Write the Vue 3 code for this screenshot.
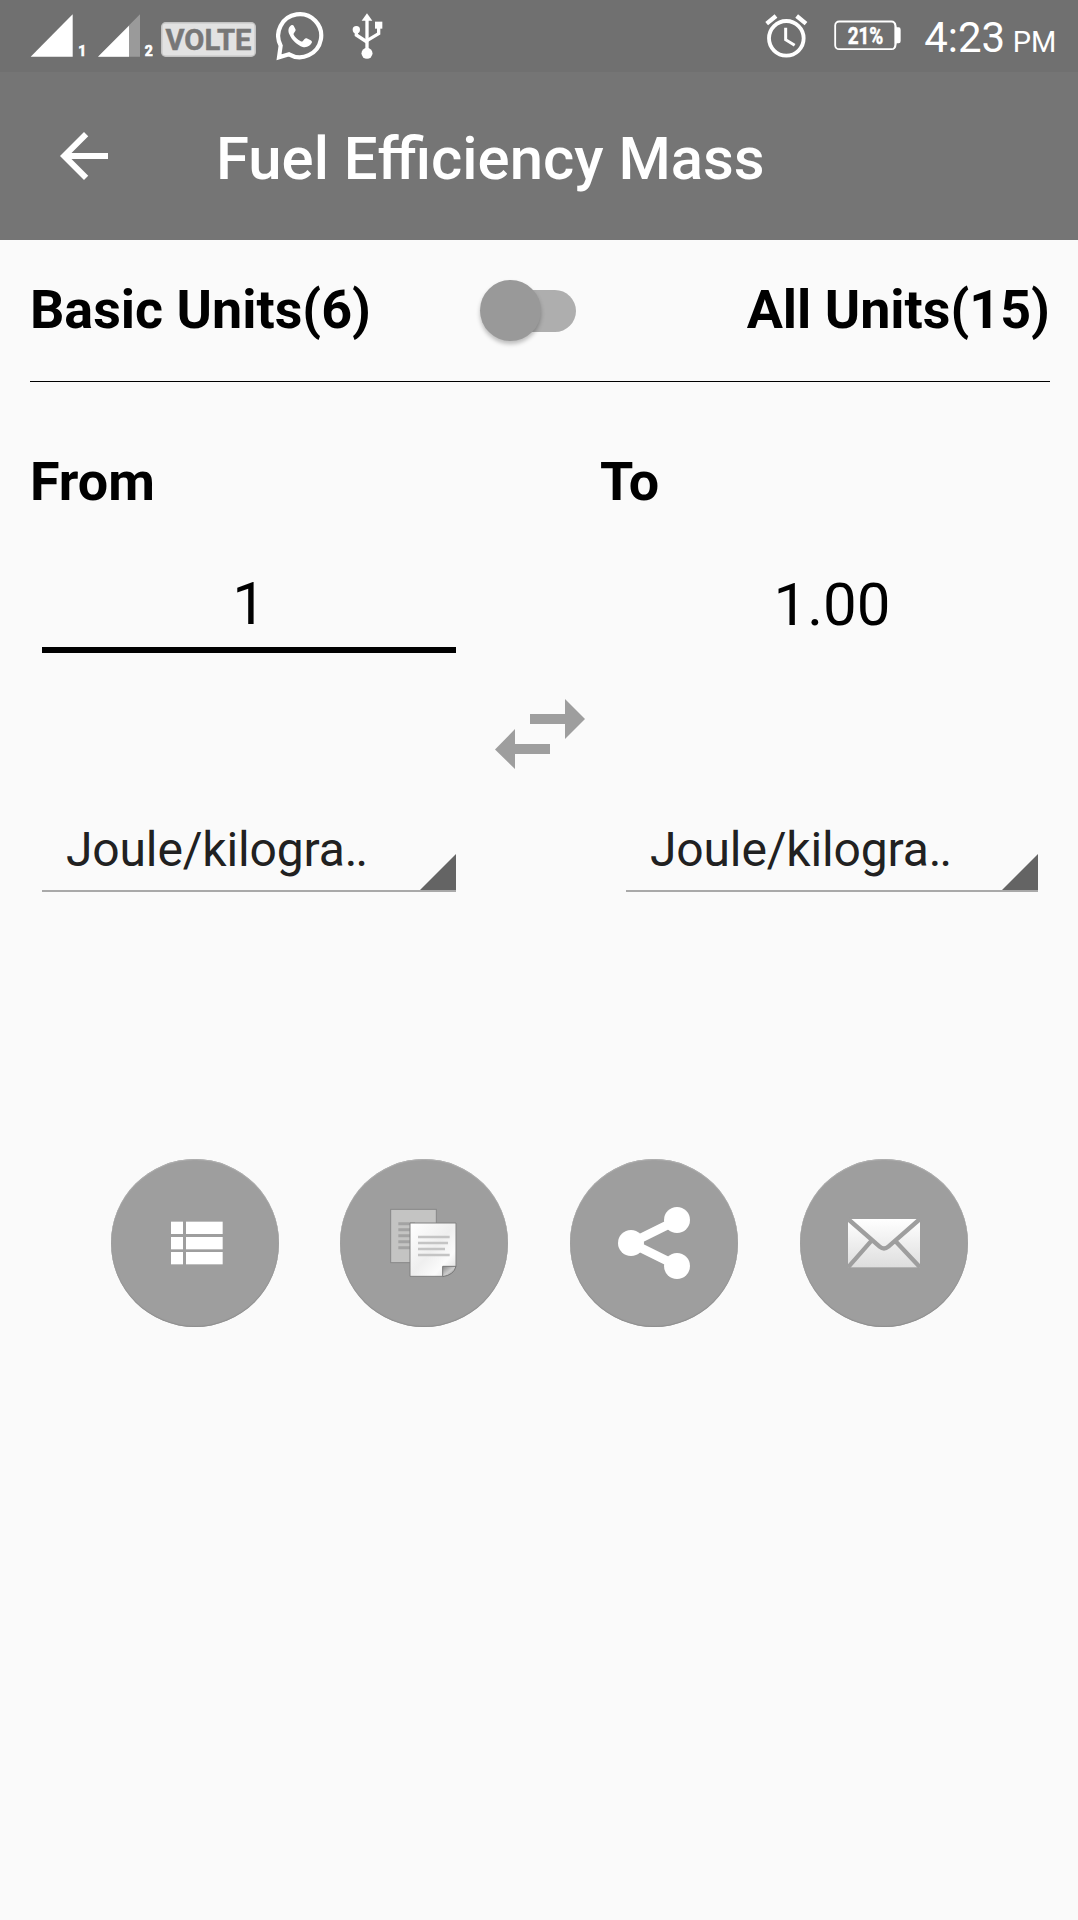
<template>
  <div class="screen">
    <div class="status-bar">
      <svg class="signal" viewBox="0 0 170 150" width="56.67" height="50">
        <path d="M2 140L128 140V13Z" fill="#fff" />
        <text x="145" y="137" class="sim">1</text>
      </svg>
      <svg class="signal-weak" viewBox="0 0 170 150" width="56.67" height="50">
        <path d="M3 140L129 140V13Z" fill="#9a9a9a" />
        <path d="M3 140L96 140V47Z" fill="#fff" />
        <text x="143" y="137" class="sim">2</text>
      </svg>
      <svg class="volte" viewBox="0 0 95 35" width="95" height="35">
        <rect x="0.75" y="0.75" width="93.5" height="33.5" rx="4" fill="#e2e2e2" stroke="#c4c4c4" stroke-width="1.5" />
        <text x="4.5" y="28.3" textLength="86" lengthAdjust="spacingAndGlyphs">VOLTE</text>
      </svg>
      <svg class="whatsapp" viewBox="828 36 144 146" width="48" height="48.67">
        <path
          d="M842 137A64.500 64.500 0 1 1 867 163L837 172Z"
          fill="none"
          stroke="#fff"
          stroke-width="12.500"
        />
        <path
          d="M875 75C865 80 863 92 868 103C876 122 892 136 908 141C920 144 932 138 936 127Q936 123 932 121L920 115Q916 114 913 118L908 124Q905 126 901 123C892 118 886 112 881 104Q880 101 882 99L886 93Q888 90 886 87L881 77Q879 74 875 75Z"
          fill="#fff"
        />
      </svg>
      <svg class="usb" viewBox="1056 40 94 140" width="31.33" height="46.67">
        <g fill="none" stroke="#fff" stroke-width="10">
          <path d="M1101 58V160" />
          <path d="M1069 90V106L1101 127" />
          <path d="M1136 76V102L1101 123" />
        </g>
        <g fill="#fff">
          <path d="M1101 41L1117 63H1085Z" />
          <circle cx="1069" cy="90" r="11" />
          <rect x="1125" y="66" width="22" height="21" />
          <circle cx="1101" cy="161" r="16.500" />
        </g>
      </svg>
      <svg class="alarm" viewBox="76 43 128 132" width="42.67" height="44">
        <g fill="none" stroke="#fff">
          <circle cx="140" cy="116" r="52" stroke-width="11.500" />
          <path d="M138 84V120L165 137" stroke-width="9" />
          <path d="M81 72L109 49M199 72L171 49" stroke-width="13" />
        </g>
      </svg>
      <svg class="battery" viewBox="280 61 202 92" width="67.33" height="30.67">
        <rect x="283.500" y="65.500" width="181" height="83" rx="12" fill="none" stroke="#fff" stroke-width="5.500" />
        <path d="M456 64Q464 66 468 83H474Q480 83 480 90V124Q480 131 474 131H468Q464 148 456 150L462 136V78Z" fill="#fff" />
        <text x="321" y="133" textLength="107" lengthAdjust="spacingAndGlyphs">21%</text>
      </svg>
      <span class="time">4:23</span>
      <span class="meridiem">PM</span>
    </div>

    <header class="app-bar">
      <svg class="back" viewBox="0 0 24 24" width="72" height="72">
        <path d="M20 11H7.830l5.590-5.590L12 4l-8 8 8 8 1.410-1.410L7.830 13H20z" fill="#fff" />
      </svg>
      <h1>Fuel Efficiency Mass</h1>
    </header>

    <main>
      <div class="units">
        <span>Basic Units(6)</span>
        <button class="toggle" :class="{ on: allUnits }" @click="allUnits = !allUnits">
          <span class="thumb" />
        </button>
        <span class="all">All Units(15)</span>
      </div>

      <div class="labels">
        <span>From</span>
        <span>To</span>
      </div>

      <div class="pair values">
        <div class="amount">{{ amount }}</div>
        <div class="result">{{ result }}</div>
      </div>

      <svg class="swap" viewBox="0 0 90 70" width="90" height="70">
        <path d="M35 15H70V0L90 20L70 40V25H35ZM55 45H20V30L0 50.500L20 70V55H55Z" fill="#9e9e9e" />
      </svg>

      <div class="pair">
        <div v-for="(unit, i) in units" :key="i" class="spinner">
          <span>{{ unit }}<span class="dots">..</span></span>
          <svg viewBox="0 0 36 36" width="36" height="36">
            <path d="M36 0V36H0Z" fill="#646464" />
          </svg>
        </div>
      </div>

      <div class="actions">
        <button v-for="action in actions" :key="action" class="action">
          <svg viewBox="0 0 504 504" width="168" height="168">
            <g v-if="action === 'list'" fill="#fff">
              <template v-for="y in [188, 234, 279]" :key="y">
                <rect x="180" :y="y" width="36" height="37" />
                <rect x="225" :y="y" width="110" height="37" />
              </template>
            </g>

            <g v-else-if="action === 'copy'">
              <defs>
                <linearGradient id="page" x1="0" y1="0" x2="1" y2="1">
                  <stop offset="0" stop-color="#fff" />
                  <stop offset="0.5" stop-color="#efefef" />
                  <stop offset="0.75" stop-color="#fbfbfb" />
                  <stop offset="1" stop-color="#d8d8d8" />
                </linearGradient>
                <linearGradient id="fold" x1="0" y1="0" x2="1" y2="1">
                  <stop offset="0" stop-color="#888" />
                  <stop offset="0.5" stop-color="#ccc" />
                  <stop offset="1" stop-color="#777" />
                </linearGradient>
              </defs>
              <rect x="152" y="151" width="137" height="160" fill="#c4c4c3" stroke="#888" stroke-width="3" />
              <path
                d="M175 194H225M175 212H225M175 230H225M175 248H225M175 266H225"
                stroke="#a3a3a3"
                stroke-width="9"
              />
              <path d="M210 192H348V322L308 352H210Z" fill="url(#page)" stroke="#818181" stroke-width="3" />
              <path
                d="M234 234H329M234 252H324M234 270H315M234 288H329"
                stroke="#c4c4c4"
                stroke-width="8"
              />
              <path d="M308 322H348Q342 348 308 353Z" fill="url(#fold)" stroke="#777" stroke-width="3" />
            </g>

            <g v-else-if="action === 'share'" fill="#fff">
              <path d="M321 184L183 252L321 320" fill="none" stroke="#fff" stroke-width="27" />
              <circle cx="321" cy="183" r="39" />
              <circle cx="183" cy="252" r="39" />
              <circle cx="321" cy="321" r="39" />
            </g>

            <g v-else>
              <defs>
                <linearGradient id="mail" x1="0" y1="0" x2="0" y2="1">
                  <stop offset="0" stop-color="#fff" />
                  <stop offset="1" stop-color="#dedede" />
                </linearGradient>
              </defs>
              <rect x="144" y="180" width="216" height="145" fill="url(#mail)" />
              <path
                d="M144 180L239 263Q252 274 265 263L360 180M144 325L212 248M360 325L288 248"
                fill="none"
                stroke="#9e9e9e"
                stroke-width="13"
              />
            </g>
          </svg>
        </button>
      </div>
    </main>
  </div>
</template>

<script setup>
import { computed, ref } from 'vue'

const allUnits = ref(false)
const amount = ref(1)
const units = ref(['Joule/kilogra', 'Joule/kilogra'])
const result = computed(() => amount.value.toFixed(2))

const actions = ['list', 'copy', 'share', 'mail']
</script>

<style>
body {
  background: #fafafa;
}
</style>

<style scoped>
.screen {
  width: 1078px;
  height: 1920px;
  overflow: hidden;
  background: #fafafa;
  color: #000;
  font-family: Roboto, sans-serif;
}

svg {
  display: block;
  flex: none;
}

button {
  border: 0;
  padding: 0;
}

.status-bar {
  display: flex;
  align-items: flex-start;
  height: 72px;
  background: #707070;
  color: #fff;
}

.signal {
  margin: 10px 0 0 30px;
}

.signal-weak {
  margin: 10px 0 0 10px;
}

.sim {
  fill: #fff;
  stroke: #fff;
  stroke-width: 2px;
  font-size: 42px;
  font-weight: 700;
}

.volte {
  margin: 21.5px 0 0 8px;
}

.volte text {
  fill: #777;
  stroke: #777;
  stroke-width: 0.5px;
  font-size: 30px;
  font-weight: 700;
}

.whatsapp {
  margin: 12px 0 0 19.500px;
}

.usb {
  margin: 13.300px 0 0 28px;
}

.alarm {
  margin: 14.300px 0 0 382px;
}

.battery {
  margin: 20.300px 0 0 26px;
}

.battery text {
  fill: #fff;
  stroke: #fff;
  stroke-width: 1.5px;
  font-size: 70px;
  font-weight: 700;
}

.time {
  margin-left: 23px;
  font-size: 42px;
  line-height: 76px;
}

.meridiem {
  margin-left: 7.5px;
  font-size: 29px;
  line-height: 85px;
}

.app-bar {
  display: flex;
  align-items: center;
  height: 168px;
  padding-left: 48px;
  background: #757575;
}

.app-bar h1 {
  margin: 5px 0 0 96px;
  color: #fff;
  font-size: 59.850px;
  font-weight: 500;
  line-height: 70px;
}

main {
  padding: 0 28px 0 30px;
}

.units {
  display: grid;
  grid-template-columns: 450px 96px 1fr;
  align-items: center;
  height: 141px;
  border-bottom: 1px solid #000;
  font-size: 53.850px;
  font-weight: 700;
}

.units > span {
  padding-bottom: 2px;
}

.all {
  text-align: right;
}

.toggle {
  display: flex;
  align-items: center;
  height: 42px;
  border-radius: 21px;
  background: linear-gradient(90deg, transparent 24px, #aeaeae 24px);
}

.thumb {
  width: 61px;
  height: 61px;
  border-radius: 50%;
  background: #999;
  box-shadow: 0 3px 4px rgba(0, 0, 0, 0.25);
}

.toggle.on .thumb {
  margin-left: auto;
}

.labels {
  display: grid;
  grid-template-columns: 570px 1fr;
  margin-top: 70px;
  font-size: 53.850px;
  font-weight: 700;
  line-height: 59px;
}

.pair {
  display: grid;
  grid-template-columns: 414px 412px;
  column-gap: 170px;
  margin: 41px 0 0 12px;
}

.values {
  margin-top: 49px;
  font-size: 60px;
  text-align: center;
}

.amount {
  border-bottom: 6px solid #000;
  line-height: 87px;
}

.result {
  line-height: 89px;
}

.swap {
  margin: 46px 0 0 465px;
}

.spinner {
  display: flex;
  justify-content: space-between;
  align-items: flex-end;
  border-bottom: 2px solid #a9a9a9;
  padding-left: 24px;
  color: #212121;
  font-size: 48px;
  letter-spacing: -0.15px;
  line-height: 80px;
}

.dots {
  letter-spacing: -2px;
}

.actions {
  display: grid;
  grid-template-columns: 229px 230px 230px 168px;
  margin: 267px 0 0 81px;
}

.action {
  width: 168px;
  height: 168px;
  border-radius: 50%;
  background: #9e9e9e;
  box-shadow: inset 0 -1px 1px #8d8d8d, inset 0 1px 1px #b0b0b0;
}
</style>
